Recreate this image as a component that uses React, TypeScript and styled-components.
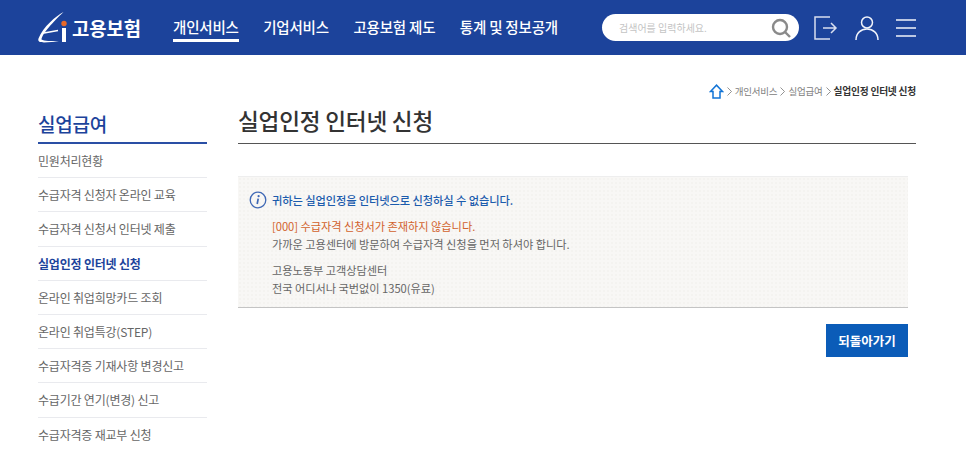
import styled, { createGlobalStyle } from 'styled-components';

const KOREAN_FAMILY = `"Noto Sans CJK KR", "Noto Sans", sans-serif`;

const GlobalStyle = createGlobalStyle`
  html, body {
    margin: 0;
    padding: 0;
    background: #fff;
    overflow: hidden;
  }
  body {
    font-family: ${KOREAN_FAMILY};
  }
`;

const Page = styled.div`
  width: 966px;
  height: 450px;
  overflow: hidden;
`;

const Header = styled.header`
  display: flex;
  align-items: center;
  height: 55px;
  padding-left: 38px;
  background: #1c439b;
  box-sizing: border-box;
`;

const Logo = styled.div`
  display: flex;
  align-items: center;
  width: 135px;
  color: #fff;
  font-size: 18.8px;
  font-weight: 700;
  letter-spacing: 0;
`;

const Nav = styled.nav`
  display: flex;
  align-items: center;
  width: 429px;
  gap: 24.5px;
`;

const NavItem = styled.a<{ $active?: boolean }>`
  color: #fff;
  font-size: 14.5px;
  font-weight: 500;
  line-height: 21px;
  letter-spacing: -0.2px;
  padding-bottom: 2px;
  border-bottom: 3px solid ${(p) => (p.$active ? '#fff' : 'transparent')};
  margin-top: 3px;
`;

const Search = styled.div`
  display: flex;
  align-items: center;
  justify-content: space-between;
  width: 197px;
  height: 27px;
  box-sizing: border-box;
  padding: 0 7px 0 17px;
  border-radius: 14px;
  background: #fff;
  color: #c4c4c4;
  font-size: 10px;
`;

const HeaderIcons = styled.div`
  display: flex;
  align-items: center;
  margin-left: 15px;
  gap: 17px;
`;

const Crumbs = styled.div`
  display: flex;
  align-items: center;
  justify-content: flex-end;
  gap: 3px;
  height: 20px;
  margin-top: 26px;
  padding-right: 50px;
  color: #808080;
  font-size: 9.5px;
  letter-spacing: -0.2px;
`;

const CrumbCurrent = styled.span`
  color: #333;
  font-size: 9.7px;
  font-weight: 700;
`;

const Body = styled.div`
  display: flex;
  align-items: flex-start;
  padding: 0 50px 0 38px;
`;

const Side = styled.aside`
  width: 169px;
  margin-right: 31px;
`;

const SideTitle = styled.h2`
  margin: 0;
  height: 43px;
  padding-top: 8px;
  box-sizing: border-box;
  border-bottom: 2px solid #2a4fa5;
  color: #1c439b;
  font-size: 19px;
  font-weight: 500;
  line-height: 30px;
  letter-spacing: -0.2px;
`;

const SideItem = styled.a<{ $active?: boolean }>`
  display: block;
  height: 34.2px;
  box-sizing: border-box;
  border-bottom: 1px solid #e9eaee;
  color: ${(p) => (p.$active ? '#1c439b' : '#666')};
  font-size: 12px;
  font-weight: ${(p) => (p.$active ? 700 : 400)};
  line-height: 33px;
  letter-spacing: -0.2px;
`;

const Main = styled.main`
  flex: 1;
`;

const Title = styled.h1`
  margin: 0;
  height: 43px;
  box-sizing: border-box;
  border-bottom: 1px solid #555;
  padding-top: 3px;
  color: #333;
  font-size: 22.6px;
  font-weight: 500;
  line-height: 34px;
  letter-spacing: -0.2px;
`;

const Notice = styled.section`
  margin-top: 32px;
  width: 670px;
  height: 132px;
  box-sizing: border-box;
  padding: 14px 11px;
  background-color: #f8f7f5;
  background-image: radial-gradient(#f4f3f0 1px, transparent 1px);
  background-size: 4px 4px;
  border-top: 1px solid #eee;
  border-bottom: 1px solid #c4c4c4;
`;

const NoticeHead = styled.div`
  display: flex;
  align-items: center;
  gap: 5px;
  color: #1c5cad;
  font-size: 11.25px;
  font-weight: 500;
  line-height: 18px;
  letter-spacing: -0.1px;
`;

const NoticeBody = styled.div`
  margin: 8px 0 0 23px;
  color: #666;
  font-size: 11.2px;
  line-height: 18px;
  letter-spacing: -0.03px;
`;

const ErrorLine = styled.div`
  color: #d2622d;
`;

const Contact = styled.div`
  margin-top: 8px;
`;

const Actions = styled.div`
  display: flex;
  justify-content: flex-end;
  width: 670px;
  margin-top: 16px;
`;

const BackButton = styled.button`
  width: 82px;
  height: 33px;
  border: 0;
  background: #0b5cb8;
  color: #fff;
  font-family: ${KOREAN_FAMILY};
  font-size: 12.5px;
  font-weight: 700;
`;

const MENU = [
  '민원처리현황',
  '수급자격 신청자 온라인 교육',
  '수급자격 신청서 인터넷 제출',
  '실업인정 인터넷 신청',
  '온라인 취업희망카드 조회',
  '온라인 취업특강(STEP)',
  '수급자격증 기재사항 변경신고',
  '수급기간 연기(변경) 신고',
  '수급자격증 재교부 신청',
];

const Chevron = () => (
  <svg width="5" height="9" viewBox="0 0 5 9" fill="none" stroke="#777" strokeWidth="0.8">
    <path d="M0.5 0.5 L4.5 4.5 L0.5 8.5" />
  </svg>
);

const App = () => {
  return (
    <Page>
      <GlobalStyle />
      <Header>
        <Logo>
          <svg width="30" height="32" viewBox="0 0 30 32" fill="none" style={{ marginRight: 4 }}>
            <path d="M25.5 0 C18 4 5 15 0.5 26.5 C-0.5 30 2 30.5 6 30.5 L21 29.5 C13 28.5 6 29.5 3.5 27.5 C4 22 15 10 25.5 0 Z" fill="#fff" />
            <path d="M6 21 L20 18.5" stroke="#fff" strokeWidth="1.3" />
            <rect x="24" y="16" width="4" height="14" fill="#fff" />
            <circle cx="26" cy="11.5" r="2.7" fill="#e8692a" />
          </svg>
          고용보험
        </Logo>
        <Nav>
          <NavItem $active>개인서비스</NavItem>
          <NavItem>기업서비스</NavItem>
          <NavItem>고용보험 제도</NavItem>
          <NavItem>통계 및 정보공개</NavItem>
        </Nav>
        <Search>
          검색어를 입력하세요.
          <svg width="22" height="22" viewBox="0 0 22 22" fill="none" stroke="#8a8a8a" strokeWidth="2.4">
            <circle cx="10" cy="10" r="7" />
            <path d="M15 15 L20 20" />
          </svg>
        </Search>
        <HeaderIcons>
          <svg width="24" height="24" viewBox="0 0 24 24" fill="none" stroke="#d7deef" strokeWidth="1.5">
            <path d="M16 1 H1 V23 H16" />
            <path d="M9 12 H22 M17 7 L22 12 L17 17" />
          </svg>
          <svg width="24" height="26" viewBox="0 0 24 26" fill="none" stroke="#f0f3fa" strokeWidth="1.5">
            <circle cx="12" cy="7.5" r="5.5" />
            <path d="M1 25 C1 18 6 14 12 14 C18 14 23 18 23 25" />
          </svg>
          <svg width="20" height="18" viewBox="0 0 20 18" fill="none" stroke="#f0f3fa" strokeWidth="1.5">
            <path d="M0 1 H20 M0 9 H20 M0 17 H20" />
          </svg>
        </HeaderIcons>
      </Header>
      <Crumbs>
        <svg width="15" height="15" viewBox="0 0 14 15" fill="none" stroke="#1274d6" strokeWidth="1.5">
          <path d="M1 7.5 L7 1.2 L13 7.5 H10.5 V14 H3.5 V7.5 Z" />
        </svg>
        <Chevron />
        <span>개인서비스</span>
        <Chevron />
        <span>실업급여</span>
        <Chevron />
        <CrumbCurrent>실업인정 인터넷 신청</CrumbCurrent>
      </Crumbs>
      <Body>
        <Side>
          <SideTitle>실업급여</SideTitle>
          {MENU.map((item) => (
            <SideItem key={item} $active={item === '실업인정 인터넷 신청'}>
              {item}
            </SideItem>
          ))}
        </Side>
        <Main>
          <Title>실업인정 인터넷 신청</Title>
          <Notice>
            <NoticeHead>
              <svg width="18" height="18" viewBox="0 0 18 18" fill="none">
                <circle cx="9" cy="9" r="7.8" stroke="#3f68b5" strokeWidth="1.3" />
                <circle cx="9.6" cy="5.2" r="1.1" fill="#3f68b5" />
                <path d="M9.2 7.6 L8.2 13" stroke="#3f68b5" strokeWidth="1.7" />
              </svg>
              귀하는 실업인정을 인터넷으로 신청하실 수 없습니다.
            </NoticeHead>
            <NoticeBody>
              <ErrorLine>[000] 수급자격 신청서가 존재하지 않습니다.</ErrorLine>
              <div>가까운 고용센터에 방문하여 수급자격 신청을 먼저 하셔야 합니다.</div>
              <Contact>
                <div>고용노동부 고객상담센터</div>
                <div>전국 어디서나 국번없이 1350(유료)</div>
              </Contact>
            </NoticeBody>
          </Notice>
          <Actions>
            <BackButton>되돌아가기</BackButton>
          </Actions>
        </Main>
      </Body>
    </Page>
  );
};

export default App;
